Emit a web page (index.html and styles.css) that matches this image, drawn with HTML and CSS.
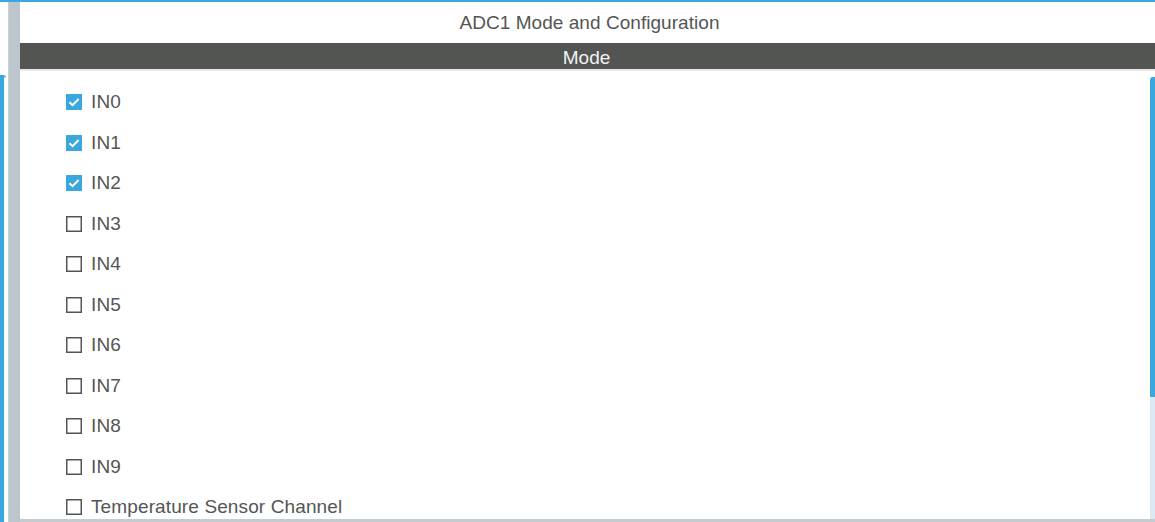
FILE: index.html
```html
<!DOCTYPE html>
<html>
<head>
<meta charset="utf-8">
<link rel="stylesheet" href="styles.css">
</head>
<body>
<div class="frame">
  <div class="left-strip"><div class="left-tab"></div></div>
  <div class="splitter"></div>
  <div class="panel">
    <div class="title">ADC1 Mode and Configuration</div>
    <div class="bar">Mode</div>
    <div class="sep"></div>
    <div class="content">
      <ul class="list">
        <li class="row"><svg class="cb on" viewBox="0 0 16 16"><rect x="0" y="0" width="16" height="16" fill="#3aa8dc"/><polyline points="3.5,8.2 6.6,11.2 12.6,5" fill="none" stroke="#fff" stroke-width="2"/></svg><span>IN0</span></li>
        <li class="row"><svg class="cb on" viewBox="0 0 16 16"><rect x="0" y="0" width="16" height="16" fill="#3aa8dc"/><polyline points="3.5,8.2 6.6,11.2 12.6,5" fill="none" stroke="#fff" stroke-width="2"/></svg><span>IN1</span></li>
        <li class="row"><svg class="cb on" viewBox="0 0 16 16"><rect x="0" y="0" width="16" height="16" fill="#3aa8dc"/><polyline points="3.5,8.2 6.6,11.2 12.6,5" fill="none" stroke="#fff" stroke-width="2"/></svg><span>IN2</span></li>
        <li class="row"><svg class="cb" viewBox="0 0 16 16"><rect x="0.75" y="0.75" width="14.5" height="14.5" fill="#fff" stroke="#555" stroke-width="1.5"/></svg><span>IN3</span></li>
        <li class="row"><svg class="cb" viewBox="0 0 16 16"><rect x="0.75" y="0.75" width="14.5" height="14.5" fill="#fff" stroke="#555" stroke-width="1.5"/></svg><span>IN4</span></li>
        <li class="row"><svg class="cb" viewBox="0 0 16 16"><rect x="0.75" y="0.75" width="14.5" height="14.5" fill="#fff" stroke="#555" stroke-width="1.5"/></svg><span>IN5</span></li>
        <li class="row"><svg class="cb" viewBox="0 0 16 16"><rect x="0.75" y="0.75" width="14.5" height="14.5" fill="#fff" stroke="#555" stroke-width="1.5"/></svg><span>IN6</span></li>
        <li class="row"><svg class="cb" viewBox="0 0 16 16"><rect x="0.75" y="0.75" width="14.5" height="14.5" fill="#fff" stroke="#555" stroke-width="1.5"/></svg><span>IN7</span></li>
        <li class="row"><svg class="cb" viewBox="0 0 16 16"><rect x="0.75" y="0.75" width="14.5" height="14.5" fill="#fff" stroke="#555" stroke-width="1.5"/></svg><span>IN8</span></li>
        <li class="row"><svg class="cb" viewBox="0 0 16 16"><rect x="0.75" y="0.75" width="14.5" height="14.5" fill="#fff" stroke="#555" stroke-width="1.5"/></svg><span>IN9</span></li>
        <li class="row"><svg class="cb" viewBox="0 0 16 16"><rect x="0.75" y="0.75" width="14.5" height="14.5" fill="#fff" stroke="#555" stroke-width="1.5"/></svg><span>Temperature Sensor Channel</span></li>
      </ul>
      <div class="scroll"><div class="thumb"></div><div class="track"></div></div>
    </div>
    <div class="bottom"></div>
  </div>
</div>
</body>
</html>
```
FILE: styles.css
```css
html, body {
  margin: 0;
  padding: 0;
  background: #fff;
}
body {
  width: 1155px;
  height: 522px;
  overflow: hidden;
  font-family: "Liberation Sans", Arial, sans-serif;
}
.frame {
  display: flex;
  height: 522px;
  box-sizing: border-box;
  border-top: 2px solid #3aa8dc;
}
.left-strip {
  width: 8px;
  flex: none;
  display: flex;
  flex-direction: column;
}
.left-tab {
  margin-top: 73px;
  width: 6px;
  flex: 1;
  box-sizing: border-box;
  border-top: 2px solid #3aa8dc;
  border-top-right-radius: 3px;
  background: linear-gradient(to right, #3aa8dc 0 4px, #fff 4px);
}
.splitter {
  width: 12px;
  flex: none;
  background: #bdc6cc;
  box-sizing: border-box;
  border-left: 1px solid #c9d1d6;
}
.panel {
  flex: 1;
  display: flex;
  flex-direction: column;
  min-width: 0;
}
.title {
  height: 41px;
  flex: none;
  display: flex;
  align-items: center;
  justify-content: center;
  font-size: 19px;
  letter-spacing: 0.05px;
  color: #555;
  padding-left: 4px;
}
.bar {
  height: 26px;
  flex: none;
  box-sizing: border-box;
  padding-top: 3px;
  background: #535553;
  color: #f2f2f2;
  font-size: 19px;
  display: flex;
  align-items: center;
  justify-content: center;
  padding-right: 2px;
}
.sep {
  height: 2px;
  flex: none;
  background: #e8e8e8;
}
.content {
  flex: 1;
  display: flex;
  min-height: 0;
}
.list {
  flex: 1;
  list-style: none;
  margin: 0;
  padding: 11px 0 0 46px;
}
.row {
  height: 40.5px;
  display: flex;
  align-items: center;
  gap: 9px;
  font-size: 19px;
  letter-spacing: 0.12px;
  color: #555;
}
.cb {
  width: 16px;
  height: 16px;
  flex: none;
  display: block;
}
.scroll {
  width: 5px;
  flex: none;
  display: flex;
  flex-direction: column;
  padding-top: 6px;
}
.thumb {
  height: 320px;
  background: #3aa8dc;
  border-top-left-radius: 3px;
}
.track {
  flex: 1;
  background: #dce9f5;
}
.bottom {
  height: 3px;
  flex: none;
  background: #c4ccd2;
}
```
